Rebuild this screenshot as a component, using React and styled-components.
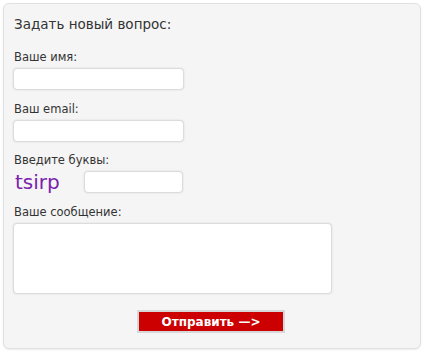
import React from 'react';
import styled, { createGlobalStyle } from 'styled-components';

const GlobalStyle = createGlobalStyle`
  body {
    margin: 0;
    background: #ffffff;
    font-family: 'DejaVu Sans', Verdana, sans-serif;
  }
`;

const Panel = styled.form`
  box-sizing: border-box;
  margin: 3px;
  width: 418px;
  height: 346px;
  padding: 10px 9px 0 9px;
  background: #f5f5f5;
  border: 1px solid #e0e0e0;
  border-radius: 6px;
  box-shadow: 0 1px 2px rgba(0, 0, 0, 0.08);
  display: flex;
  flex-direction: column;
`;

const Title = styled.div`
  font-size: 13.5px;
  color: #333333;
  margin: 2px 0 18px 1px;
`;

const Label = styled.label`
  display: block;
  font-size: 11.5px;
  color: #333333;
  margin: 0 0 4px 1px;
`;

const Field = styled.input`
  box-sizing: border-box;
  display: block;
  width: ${(p) => p.$width ?? 171}px;
  height: 22px;
  margin: 0 0 ${(p) => p.$gap ?? 12}px 0;
  background: #ffffff;
  border: 1px solid #dcdcdc;
  border-radius: 4px;
  box-shadow: 0 0 2px rgba(0, 0, 0, 0.12);
  outline: none;
`;

const CaptchaRow = styled.div`
  display: flex;
  align-items: center;
  height: 22px;
  margin: 0 0 12px 0;
`;

const Captcha = styled.span`
  font-size: 20px;
  color: #7a22ad;
  width: 71px;
  padding-left: 2px;
  box-sizing: border-box;
  line-height: 22px;
`;

const Message = styled.textarea`
  box-sizing: border-box;
  display: block;
  width: 319px;
  height: 71px;
  margin: 0;
  resize: none;
  background: #ffffff;
  border: 1px solid #dcdcdc;
  border-radius: 4px;
  box-shadow: 0 0 2px rgba(0, 0, 0, 0.12);
  outline: none;
`;

const Actions = styled.div`
  display: flex;
  justify-content: center;
  padding: 16px 0 0 0;
  width: 398px;
`;

const SubmitButton = styled.button`
  box-sizing: border-box;
  width: 148px;
  height: 23px;
  margin-left: -2px;
  background: #cc0000;
  border: 2px solid #d8d8d8;
  color: #ffffff;
  font-family: 'DejaVu Sans', Verdana, sans-serif;
  font-weight: bold;
  font-size: 12px;
  padding: 0;
  cursor: pointer;
`;

export default function App() {
  return (
    <>
      <GlobalStyle />
      <Panel onSubmit={(e) => e.preventDefault()}>
        <Title>Задать новый вопрос:</Title>
        <Label>Ваше имя:</Label>
        <Field type="text" />
        <Label>Ваш email:</Label>
        <Field type="text" $gap={11} />
        <Label>Введите буквы:</Label>
        <CaptchaRow>
          <Captcha>tsirp</Captcha>
          <Field type="text" $width={99} $gap={0} />
        </CaptchaRow>
        <Label>Ваше сообщение:</Label>
        <Message />
        <Actions>
          <SubmitButton type="submit">Отправить —&gt;</SubmitButton>
        </Actions>
      </Panel>
    </>
  );
}
